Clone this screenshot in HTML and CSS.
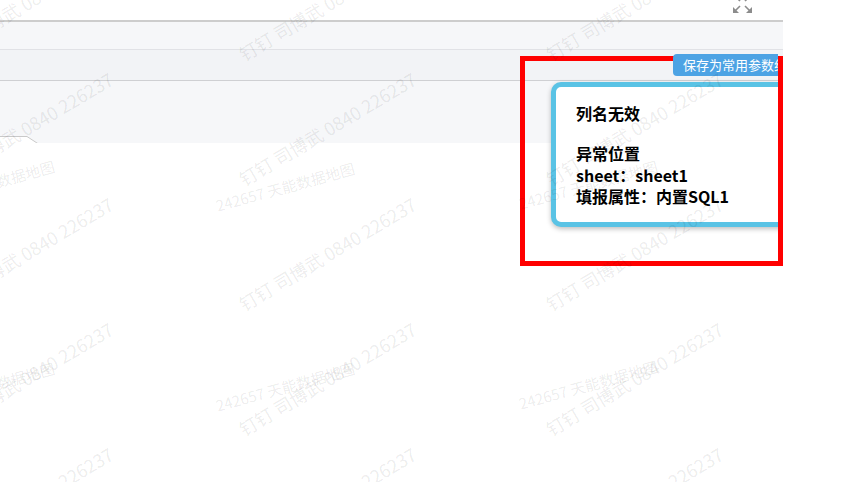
FILE: index.html
```html
<!DOCTYPE html>
<html lang="zh-CN">
<head>
<meta charset="utf-8">
<title>列名无效</title>
<link rel="stylesheet" href="styles.css">
</head>
<body>
<div class="page">
  <div class="topbar">
    <svg class="expand" width="19" height="19" viewBox="0 0 19 19" aria-hidden="true">
      <g fill="#8c8c8c" stroke="none">
        <polygon points="0,0 6,0 0,6"/>
        <polygon points="19,0 13,0 19,6"/>
        <polygon points="0,19 0,13 6,19"/>
        <polygon points="19,19 13,19 19,13"/>
      </g>
      <g stroke="#8c8c8c" stroke-width="1.6" fill="none">
        <line x1="2" y1="2" x2="7" y2="7"/>
        <line x1="17" y1="2" x2="12" y2="7"/>
        <line x1="2" y1="17" x2="7" y2="12"/>
        <line x1="17" y1="17" x2="12" y2="12"/>
      </g>
    </svg>
  </div>
  <div class="toolbar"></div>
  <div class="filterbar">
    <button class="save-btn">保存为常用参数组</button>
  </div>
  <div class="params">
    <svg class="tab" width="40" height="8" viewBox="0 0 40 8" aria-hidden="true">
      <path d="M0 0.5 H27 L38.5 8 H0 Z" fill="#ffffff" stroke="none"/>
      <path d="M0 0.5 H27 L38.5 8" fill="none" stroke="#c9c9c9" stroke-width="1"/>
    </svg>
  </div>
  <div class="content"></div>

  <div class="popup">
    <p class="title">列名无效</p>
    <p class="detail">异常位置<br>sheet：sheet1<br>填报属性：内置SQL1</p>
  </div>
  <div class="highlight"></div>

  <div class="watermarks" aria-hidden="true">
    <div class="wm-a" style="left:111px;top:-48px"><span>钉钉 司博武 0840 226237</span></div>
    <div class="wm-a" style="left:111px;top:77px"><span>钉钉 司博武 0840 226237</span></div>
    <div class="wm-a" style="left:111px;top:202px"><span>钉钉 司博武 0840 226237</span></div>
    <div class="wm-a" style="left:111px;top:327px"><span>钉钉 司博武 0840 226237</span></div>
    <div class="wm-a" style="left:111px;top:452px"><span>钉钉 司博武 0840 226237</span></div>
    <div class="wm-a" style="left:414px;top:-48px"><span>钉钉 司博武 0840 226237</span></div>
    <div class="wm-a" style="left:414px;top:77px"><span>钉钉 司博武 0840 226237</span></div>
    <div class="wm-a" style="left:414px;top:202px"><span>钉钉 司博武 0840 226237</span></div>
    <div class="wm-a" style="left:414px;top:327px"><span>钉钉 司博武 0840 226237</span></div>
    <div class="wm-a" style="left:414px;top:452px"><span>钉钉 司博武 0840 226237</span></div>
    <div class="wm-a" style="left:721px;top:-48px"><span>钉钉 司博武 0840 226237</span></div>
    <div class="wm-a" style="left:721px;top:77px"><span>钉钉 司博武 0840 226237</span></div>
    <div class="wm-a" style="left:721px;top:202px"><span>钉钉 司博武 0840 226237</span></div>
    <div class="wm-a" style="left:721px;top:327px"><span>钉钉 司博武 0840 226237</span></div>
    <div class="wm-a" style="left:721px;top:452px"><span>钉钉 司博武 0840 226237</span></div>

    <div class="wm-b" style="left:54px;top:165px"><span>242657 天能数据地图</span></div>
    <div class="wm-b" style="left:54px;top:367px"><span>242657 天能数据地图</span></div>
    <div class="wm-b" style="left:354px;top:167px"><span>242657 天能数据地图</span></div>
    <div class="wm-b" style="left:354px;top:367px"><span>242657 天能数据地图</span></div>
    <div class="wm-b" style="left:657px;top:165px"><span>242657 天能数据地图</span></div>
    <div class="wm-b" style="left:657px;top:365px"><span>242657 天能数据地图</span></div>
  </div>
</div>
</body>
</html>
```

FILE: styles.css
```css
html, body {
  margin: 0;
  padding: 0;
  background: #ffffff;
}

body {
  font-family: "Noto Sans CJK SC", "Noto Sans", "Liberation Sans", sans-serif;
  width: 848px;
  height: 482px;
  overflow: hidden;
}

.page {
  position: relative;
  width: 783px;
  height: 482px;
  overflow: hidden;
  display: flex;
  flex-direction: column;
  background: #ffffff;
}

.topbar {
  height: 20px;
  flex: none;
  display: flex;
  justify-content: flex-end;
  align-items: flex-start;
  padding-right: 31px;
  overflow: hidden;
  background: #ffffff;
}

.expand {
  display: block;
  margin-top: -6px;
}

.toolbar {
  flex: none;
  height: 27px;
  background: #f6f7f9;
  border-top: 2px solid #cdcdcd;
  border-bottom: 1px solid #e1e2e6;
}

.filterbar {
  flex: none;
  height: 30px;
  background: #f2f3f6;
  border-bottom: 1px solid #cfd0d3;
  display: flex;
  justify-content: flex-end;
  align-items: center;
  padding-right: 5px;
}

.save-btn {
  position: relative;
  z-index: 3;
  width: 105px;
  height: 22px;
  padding: 0 0 0 10px;
  margin: 0;
  border: none;
  border-radius: 4px 0 0 4px;
  background: #4da3e4;
  color: #ffffff;
  font-family: "Noto Sans CJK SC", "Noto Sans", sans-serif;
  font-size: 13px;
  line-height: 22px;
  text-align: left;
  white-space: nowrap;
  overflow: hidden;
}

.params {
  flex: none;
  height: 62px;
  background: #f6f7f9;
  display: flex;
  align-items: flex-end;
}

.tab {
  display: block;
  margin-bottom: -1px;
}

.content {
  flex: 1;
  background: #ffffff;
}

.popup {
  position: absolute;
  z-index: 1;
  left: 551px;
  top: 82px;
  width: 300px;
  height: 145px;
  box-sizing: border-box;
  border: 5px solid #5ac3e5;
  border-radius: 10px;
  background: #ffffff;
  box-shadow: 0 2px 5px rgba(0, 0, 0, 0.25);
  padding: 16px 20px 14px;
  color: #000000;
  font-size: 16px;
  font-weight: 700;
  line-height: 21.5px;
}

.popup p {
  margin: 0;
}

.popup .title {
  margin-bottom: 18.5px;
}

.highlight {
  position: absolute;
  z-index: 2;
  left: 520px;
  top: 56px;
  width: 263px;
  height: 210px;
  box-sizing: border-box;
  border: 5px solid #ff0000;
}

.watermarks {
  position: absolute;
  z-index: 4;
  left: 0;
  top: 0;
  width: 783px;
  height: 482px;
  pointer-events: none;
  overflow: hidden;
}

.wm-a,
.wm-b {
  position: absolute;
  width: 0;
  height: 0;
}

.wm-a {
  transform: rotate(-30.7deg);
}

.wm-b {
  transform: rotate(-15.4deg);
}

.wm-a span,
.wm-b span {
  position: absolute;
  right: 0;
  white-space: nowrap;
  color: rgba(0, 0, 0, 0.085);
  font-family: "Noto Sans CJK SC", sans-serif;
  font-weight: 400;
}

.wm-a span {
  font-size: 18px;
  line-height: 18px;
  top: -9px;
}

.wm-b span {
  font-size: 15px;
  line-height: 15px;
  top: -7.5px;
}
```
